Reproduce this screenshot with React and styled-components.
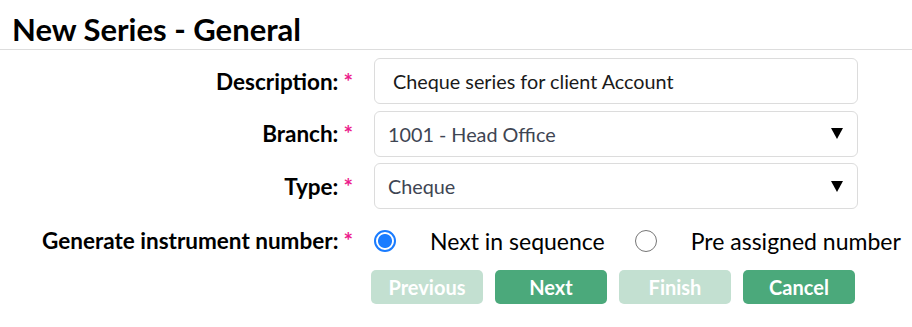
import React, { useState } from 'react';
import styled, { createGlobalStyle } from 'styled-components';

const GlobalStyle = createGlobalStyle`
  body {
    margin: 0;
    background: #fff;
    font-family: Lato, "Open Sans", sans-serif;
    color: #111;
  }
`;

const Page = styled.div`
  width: 912px;
`;

const Title = styled.h1`
  margin: 0;
  padding: 6px 12px 0;
  height: 43px;
  font-size: 31px;
  font-weight: 700;
  line-height: 46px;
  color: #000;
  border-bottom: 1px solid #ddd;
`;

const Form = styled.div`
  display: grid;
  grid-template-columns: 353px 484px;
  column-gap: 21px;
  row-gap: 6.5px;
  padding-top: 8px;
  align-items: center;
`;

const Label = styled.label`
  text-align: right;
  font-size: 22.5px;
  font-weight: 700;
  color: #000;
  white-space: nowrap;
  margin-top: ${p => (p.$radio ? '9px' : '0')};

  span {
    color: #ec1c8c;
    margin-left: 5px;
  }
`;

const TextInput = styled.div`
  height: 46px;
  box-sizing: border-box;
  border: 1px solid #dcdcdc;
  border-radius: 6px;
  padding: 0 18px;
  display: flex;
  align-items: center;
  font-size: 19.8px;
  color: #1a1a1a;
`;

const Select = styled(TextInput)`
  padding: 0 13px;
  justify-content: space-between;
  color: #3e4553;
`;

const Arrow = styled.svg`
  width: 12px;
  height: 11px;
  margin-right: 1px;
`;

const RadioRow = styled.div`
  display: flex;
  align-items: center;
  height: 32px;
  margin-top: 9px;
  white-space: nowrap;
`;

const RadioOption = styled.div`
  display: flex;
  align-items: center;
  flex-shrink: 0;
  margin-right: 30px;
  font-size: 23px;
  color: #000;
  cursor: pointer;
`;

const RadioDot = styled.span`
  flex-shrink: 0;
  width: 22px;
  height: 22px;
  box-sizing: border-box;
  border-radius: 50%;
  margin-right: 34px;
  border: ${p => (p.$checked ? '2px solid #1a7cff' : '1.5px solid #767676')};
  background: ${p => (p.$checked ? 'radial-gradient(circle, #1a7cff 0 6.5px, #fff 7.5px)' : '#fff')};
`;

const Buttons = styled.div`
  grid-column: 2;
  display: flex;
  gap: 12px;
  margin-left: -3px;
  margin-top: 7px;
`;

const Button = styled.button`
  width: 112px;
  height: 34px;
  border: none;
  border-radius: 5px;
  font-family: inherit;
  font-size: 20px;
  font-weight: 700;
  color: #fff;
  background: ${p => (p.disabled ? '#c3e0d1' : '#4ba97b')};
  cursor: ${p => (p.disabled ? 'default' : 'pointer')};
`;

const Caret = () => (
  <Arrow viewBox="0 0 12 11">
    <path d="M0 0 H12 L6 11 Z" fill="#000" />
  </Arrow>
);

export default function App() {
  const [mode, setMode] = useState('seq');

  return (
    <Page>
      <GlobalStyle />
      <Title>New Series - General</Title>
      <Form>
        <Label>Description:<span>*</span></Label>
        <TextInput>Cheque series for client Account</TextInput>

        <Label>Branch:<span>*</span></Label>
        <Select>1001 - Head Office<Caret /></Select>

        <Label>Type:<span>*</span></Label>
        <Select>Cheque<Caret /></Select>

        <Label $radio>Generate instrument number:<span>*</span></Label>
        <RadioRow>
          <RadioOption onClick={() => setMode('seq')}>
            <RadioDot $checked={mode === 'seq'} />Next in sequence
          </RadioOption>
          <RadioOption onClick={() => setMode('pre')}>
            <RadioDot $checked={mode === 'pre'} />Pre assigned number
          </RadioOption>
        </RadioRow>

        <Buttons>
          <Button disabled>Previous</Button>
          <Button>Next</Button>
          <Button disabled>Finish</Button>
          <Button>Cancel</Button>
        </Buttons>
      </Form>
    </Page>
  );
}
